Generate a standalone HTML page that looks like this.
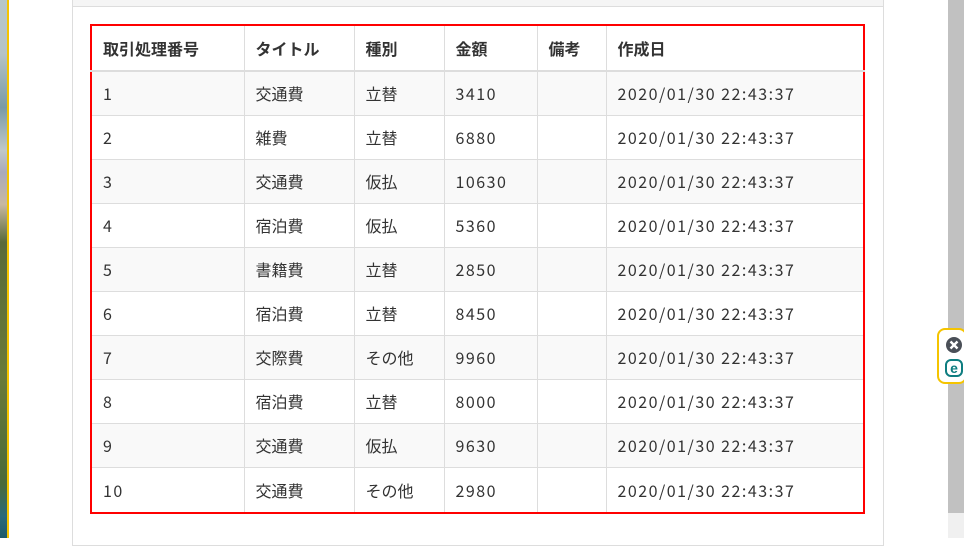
<!DOCTYPE html>
<html><head><meta charset="utf-8"><style>
body{margin:0;width:964px;height:538px;overflow:hidden;background:#fff;position:relative;font-family:"Noto Sans CJK JP","Liberation Sans",sans-serif;color:#333}
.strip{position:absolute;left:0;top:0;width:7px;height:538px;background:linear-gradient(#b7c7c9 0%,#b5c3c6 10%,#7a9aa6 20%,#c0c8c8 28%,#aab 32%,#c8b8a0 38%,#5a6a3a 45%,#6a7a3a 70%,#4a6a3a 90%,#2a6a7a 96%,#1e5a6a 100%)}
.yl{position:absolute;left:7px;top:0;width:2px;height:538px;background:#f5c400}
.panel{position:absolute;left:72px;top:-1px;width:810px;height:545px;border:1px solid #ddd;background:#fff}
.ptop{position:absolute;left:73px;top:0;width:810px;height:6px;background:#f5f5f5;border-bottom:1px solid #ddd}
table{position:absolute;left:90px;top:24px;border-collapse:collapse;border:2px solid #f00;font-size:16px;table-layout:fixed;width:773px}
td,th{height:44px;padding:0 0 0 11px;text-align:left;border-left:1px solid #ddd;border-top:1px solid #ddd;box-sizing:border-box;line-height:20px;vertical-align:middle;white-space:nowrap;overflow:hidden}
td{font-weight:normal}
td.n{letter-spacing:1.5px}
th{font-weight:bold;height:46px;border-bottom:2px solid #ddd;border-top:none}
tbody tr:last-child td{height:46px}
td:first-child,th:first-child{border-left:none}
tbody tr:nth-child(odd) td{background:#f9f9f9}
.sb{position:absolute;left:948px;top:0;width:16px;height:513px;background:#c1c1c1}
.sb2{position:absolute;left:948px;top:513px;width:16px;height:25px;background:#f0f0f0}
.esb{position:absolute;left:937px;top:328px;width:30px;height:56px;border:2px solid #f5c400;border-radius:8px;background:#fff;box-sizing:border-box}
</style></head><body>
<div class="strip"></div><div class="yl"></div>
<div class="panel"></div><div class="ptop"></div>
<table>
<colgroup><col style="width:153px"><col style="width:110px"><col style="width:90px"><col style="width:93px"><col style="width:69px"><col style="width:258px"></colgroup>
<thead><tr><th>取引処理番号</th><th>タイトル</th><th>種別</th><th>金額</th><th>備考</th><th>作成日</th></tr></thead>
<tbody>
<tr><td class="n">1</td><td>交通費</td><td>立替</td><td class="n">3410</td><td></td><td class="n">2020/01/30 22:43:37</td></tr>
<tr><td class="n">2</td><td>雑費</td><td>立替</td><td class="n">6880</td><td></td><td class="n">2020/01/30 22:43:37</td></tr>
<tr><td class="n">3</td><td>交通費</td><td>仮払</td><td class="n">10630</td><td></td><td class="n">2020/01/30 22:43:37</td></tr>
<tr><td class="n">4</td><td>宿泊費</td><td>仮払</td><td class="n">5360</td><td></td><td class="n">2020/01/30 22:43:37</td></tr>
<tr><td class="n">5</td><td>書籍費</td><td>立替</td><td class="n">2850</td><td></td><td class="n">2020/01/30 22:43:37</td></tr>
<tr><td class="n">6</td><td>宿泊費</td><td>立替</td><td class="n">8450</td><td></td><td class="n">2020/01/30 22:43:37</td></tr>
<tr><td class="n">7</td><td>交際費</td><td>その他</td><td class="n">9960</td><td></td><td class="n">2020/01/30 22:43:37</td></tr>
<tr><td class="n">8</td><td>宿泊費</td><td>立替</td><td class="n">8000</td><td></td><td class="n">2020/01/30 22:43:37</td></tr>
<tr><td class="n">9</td><td>交通費</td><td>仮払</td><td class="n">9630</td><td></td><td class="n">2020/01/30 22:43:37</td></tr>
<tr><td class="n">10</td><td>交通費</td><td>その他</td><td class="n">2980</td><td></td><td class="n">2020/01/30 22:43:37</td></tr>
</tbody></table>
<div class="sb"></div><div class="sb2"></div>
<div class="esb">
<svg width="30" height="56" style="position:absolute;left:-2px;top:-2px">
<circle cx="17" cy="17" r="8" fill="#4a4f57"/>
<path d="M13.5 13.5l7 7M20.5 13.5l-7 7" stroke="#fff" stroke-width="2.4"/>
<rect x="9" y="32" width="16" height="16" rx="5" fill="none" stroke="#0e7d80" stroke-width="2"/>
<text x="17" y="45" font-size="14" font-weight="bold" fill="#0e7d80" text-anchor="middle" font-family="Liberation Sans,sans-serif">e</text>
</svg></div>
</body></html>
